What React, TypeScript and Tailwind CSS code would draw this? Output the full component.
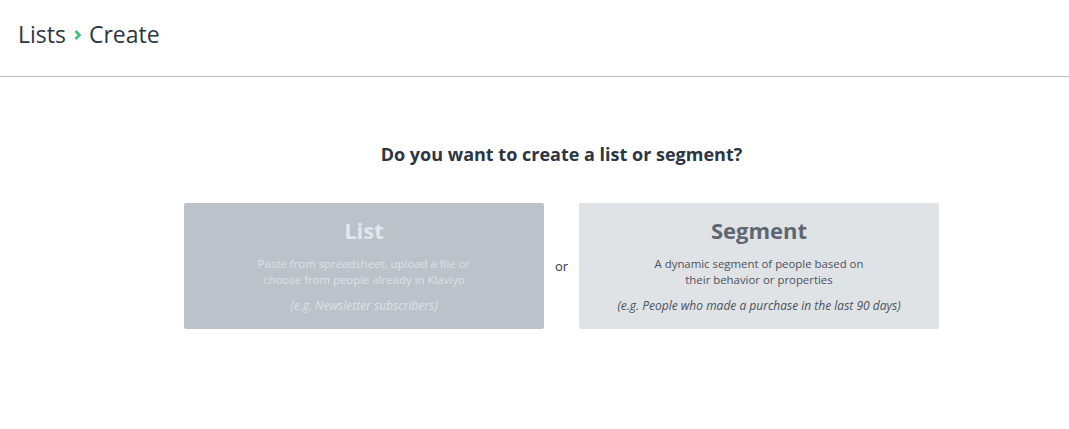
export default function App() {
  return (
    <div className="w-[1069px] h-[429px] bg-white" style={{ fontFamily: "'Open Sans', Lato, sans-serif" }}>
      <div className="h-[77px] border-b border-[#b7bdc6] flex items-center pl-[18px] pb-[8px]">
        <div className="flex items-center text-[23px] text-[#2c3541] leading-none">
          <span>Lists</span>
          <svg width="10" height="12" viewBox="0 0 10 12" className="ml-[7px] mr-[6px] mt-[2px]">
            <path d="M2.5 2 L6.5 6 L2.5 10" fill="none" stroke="#3cc27a" strokeWidth="2.6" />
          </svg>
          <span>Create</span>
        </div>
      </div>
      <div className="flex flex-col items-center pl-[54px]">
        <h1 className="mt-[65px] text-[18px] font-bold text-[#2c3541] leading-[24px]">Do you want to create a list or segment?</h1>
        <div className="mt-[37px] flex items-center">
          <div className="w-[360px] h-[126px] bg-[#bcc2ca] rounded-[2px] flex flex-col items-center pt-[12px]">
            <div className="text-[22px] font-bold text-[#e3e6ea] leading-[30px]">List</div>
            <div className="mt-[11px] text-[11.4px] text-[#dde1e5] leading-[16px] text-center">
              Paste from spreadsheet, upload a file or<br />choose from people already in Klaviyo
            </div>
            <div className="mt-[10px] text-[12px] italic text-[#dde1e5] leading-[16px]">(e.g. Newsletter subscribers)</div>
          </div>
          <div className="w-[35px] text-center text-[13px] text-[#333] leading-none">or</div>
          <div className="w-[360px] h-[126px] bg-[#e0e3e6] rounded-[2px] flex flex-col items-center pt-[12px]">
            <div className="text-[22px] font-bold text-[#5e6672] leading-[30px]">Segment</div>
            <div className="mt-[11px] text-[11.4px] text-[#4b525c] leading-[16px] text-center">
              A dynamic segment of people based on<br />their behavior or properties
            </div>
            <div className="mt-[10px] text-[12px] italic text-[#4b525c] leading-[16px]">(e.g. People who made a purchase in the last 90 days)</div>
          </div>
        </div>
      </div>
    </div>
  );
}
